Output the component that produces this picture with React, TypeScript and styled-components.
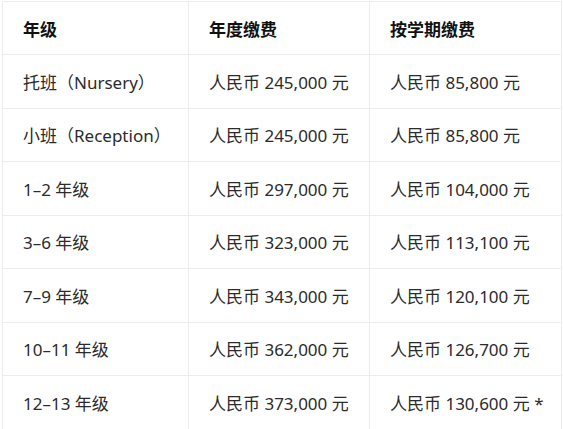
import React from 'react'
import styled, { createGlobalStyle } from 'styled-components'

const GlobalStyle = createGlobalStyle`
  html, body {
    margin: 0;
    padding: 0;
    background: #fff;
  }
  body {
    font-family: "Noto Sans", "Noto Sans CJK SC", sans-serif;
  }
`

const Wrap = styled.div`
  padding: 1px 1px 1px 2px;
  width: 563px;
  box-sizing: border-box;
`

const Table = styled.table`
  width: 100%;
  border-collapse: collapse;
  table-layout: fixed;
  border: 1px solid #ededed;
  font-size: 17px;
  color: #2b2b2b;
`

const HeadCell = styled.th<{ $width: number }>`
  box-sizing: border-box;
  width: ${({ $width }) => $width}px;
  height: 53px;
  padding: 0 20px;
  text-align: left;
  font-weight: 700;
  color: #111;
  border: 1px solid #ececec;
  border-top: none;
`

const Cell = styled.td`
  height: 52.5px;
  padding: 0 20px;
  border: 1px solid #ececec;
  white-space: nowrap;
  font-weight: 400;
`

const rows = [
  ['托班（Nursery）', '人民币 245,000 元', '人民币 85,800 元'],
  ['小班（Reception）', '人民币 245,000 元', '人民币 85,800 元'],
  ['1–2 年级', '人民币 297,000 元', '人民币 104,000 元'],
  ['3–6 年级', '人民币 323,000 元', '人民币 113,100 元'],
  ['7–9 年级', '人民币 343,000 元', '人民币 120,100 元'],
  ['10–11 年级', '人民币 362,000 元', '人民币 126,700 元'],
  ['12–13 年级', '人民币 373,000 元', '人民币 130,600 元 *']
]

const App = () => {
  return (
    <Wrap>
      <GlobalStyle />
      <Table>
        <thead>
          <tr>
            <HeadCell $width={186}>年级</HeadCell>
            <HeadCell $width={181}>年度缴费</HeadCell>
            <HeadCell $width={192}>按学期缴费</HeadCell>
          </tr>
        </thead>
        <tbody>
          {rows.map((row, idx) => (
            <tr key={`fee row ${idx + 1}`}>
              {row.map((text, i) => (
                <Cell key={i}>{text}</Cell>
              ))}
            </tr>
          ))}
        </tbody>
      </Table>
    </Wrap>
  )
}

export default App
